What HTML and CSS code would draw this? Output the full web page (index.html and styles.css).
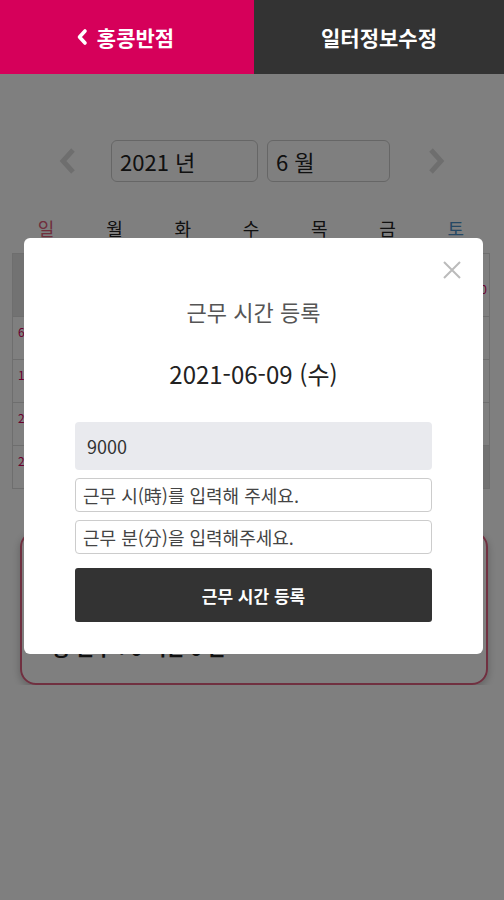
FILE: index.html
```html
<!DOCTYPE html>
<html lang="ko">
<head>
  <meta charset="UTF-8" />
  <meta name="viewport" content="width=device-width, initial-scale=1.0"/>
  <title>일터정보수정</title>
  <link rel="stylesheet" href="styles.css">
</head>
<body>
  <div class="top">
    <div class="top-left">
      <svg class="back" viewBox="0 0 12 18" width="12" height="18"><path d="M9 3 L3.5 9 L9 15" fill="none" stroke="#fff" stroke-width="3.6" stroke-linecap="round" stroke-linejoin="round"/></svg>
      <span>홍콩반점</span>
    </div>
    <div class="top-right">일터정보수정</div>
  </div>

  <div class="달력">
    <div class="월선택">
      <svg class="화살표" viewBox="0 0 20 28" width="20" height="28"><path d="M15 3 L5 14 L15 25" fill="none" stroke="#ddd" stroke-width="5"/></svg>
      <div class="박스 년">2021 년</div>
      <div class="박스 월">6 월</div>
      <svg class="화살표" viewBox="0 0 20 28" width="20" height="28"><path d="M5 3 L15 14 L5 25" fill="none" stroke="#ddd" stroke-width="5"/></svg>
    </div>

    <div class="요일">
      <span class="일">일</span><span>월</span><span>화</span><span>수</span><span>목</span><span>금</span><span class="토">토</span>
    </div>

    <div class="날짜">
      <div class="칸 빈 첫줄"></div><div class="칸 빈 첫줄"></div><div class="칸 첫줄">1</div><div class="칸 첫줄">2</div><div class="칸 첫줄">3</div><div class="칸 첫줄">4</div><div class="칸 첫줄 토"><span class="기록">10:00</span>5</div>
      <div class="칸 일">6</div><div class="칸">7</div><div class="칸">8</div><div class="칸">9</div><div class="칸">10</div><div class="칸">11</div><div class="칸 토">12</div>
      <div class="칸 일">13</div><div class="칸">14</div><div class="칸">15</div><div class="칸">16</div><div class="칸">17</div><div class="칸">18</div><div class="칸 토">19</div>
      <div class="칸 일">20</div><div class="칸">21</div><div class="칸">22</div><div class="칸">23</div><div class="칸">24</div><div class="칸">25</div><div class="칸 토">26</div>
      <div class="칸 일">27</div><div class="칸">28</div><div class="칸">29</div><div class="칸">30</div><div class="칸 빈"></div><div class="칸 빈"></div><div class="칸 빈"></div>
    </div>

    <div class="합계">
      <p>이번달 근무시간</p>
      <p class="합계-값">총 근무 : 0 시간 0 분</p>
    </div>
  </div>

  <div class="덮개">
    <div class="모달">
      <svg class="닫기" viewBox="0 0 20 20" width="20" height="20"><path d="M2 2 L18 18 M18 2 L2 18" stroke="#bbb" stroke-width="2"/></svg>
      <h2>근무 시간 등록</h2>
      <p class="일자">2021-06-09 (수)</p>
      <div class="입력">
        <input type="text" class="금액" value="9000" readonly>
        <input type="text" class="칸입력" placeholder="근무 시(時)를 입력해 주세요.">
        <input type="text" class="칸입력" placeholder="근무 분(分)을 입력해주세요.">
        <button class="등록">근무 시간 등록</button>
      </div>
    </div>
  </div>
</body>
</html>
```

FILE: styles.css
```css
body {
  margin: 0;
  font-family: "Noto Sans CJK KR", "Noto Sans", sans-serif;
  background-color: #fff;
  color: #222;
}

.top {
  position: relative;
  z-index: 10;
  display: grid;
  grid-template-columns: 254px 1fr;
  height: 74px;
  color: #fff;
  font-size: 21px;
  font-weight: bold;
}

.top-left {
  background-color: #d6005a;
  display: flex;
  align-items: center;
  justify-content: center;
  gap: 9px;
  padding-right: 4px;
}

.top-right {
  background-color: #333;
  display: flex;
  align-items: center;
  justify-content: center;
}

.월선택 {
  display: flex;
  align-items: center;
  justify-content: center;
  margin-top: 66px;
  height: 42px;
}

.화살표 {
  margin: 0 33px 0 34px;
}

.박스 {
  box-sizing: border-box;
  height: 42px;
  border: 1px solid #ccc;
  border-radius: 6px;
  font-size: 22px;
  line-height: 40px;
  padding-left: 8px;
}

.년 {
  width: 147px;
  margin-right: 9px;
}

.월 {
  width: 123px;
}

.월선택 .화살표:last-child {
  margin: 0 34px 0 36px;
}

.요일 {
  display: grid;
  grid-template-columns: repeat(7, 1fr);
  margin: 35px 14px 0 12px;
  font-size: 18px;
  text-align: center;
  line-height: 22px;
}

.요일 .일 {
  color: #e0607a;
}

.요일 .토 {
  color: #4a90c8;
}

.날짜 {
  display: grid;
  grid-template-columns: repeat(7, 1fr);
  margin: 14px 14px 0 12px;
  border-top: 1px solid #ddd;
  border-left: 1px solid #ddd;
}

.칸 {
  position: relative;
  height: 43px;
  border-right: 1px solid #ddd;
  border-bottom: 1px solid #ddd;
  font-size: 12px;
  padding: 6px 0 0 5px;
  box-sizing: border-box;
  color: #333;
}

.칸.첫줄 {
  height: 63px;
}

.칸.빈 {
  background-color: #e4e4e4;
}

.칸.일 {
  color: #d6005a;
}

.칸.토 {
  color: #2a78c0;
}

.기록 {
  position: absolute;
  right: 2px;
  top: 26px;
  color: #d6005a;
  font-size: 12px;
}

.합계 {
  margin: 42px 16px 0 20px;
  height: 154px;
  box-sizing: border-box;
  border: 2px solid #e06080;
  border-radius: 16px;
  box-shadow: 0 3px 8px rgba(0, 0, 0, 0.25);
  padding: 30px 30px 0;
  font-weight: bold;
  font-size: 20px;
}

.합계 p {
  margin: 0 0 18px;
  line-height: 30px;
}

.합계-값 {
  padding-top: 22px;
}

.덮개 {
  position: fixed;
  top: 74px;
  left: 0;
  right: 0;
  bottom: 0;
  background-color: rgba(0, 0, 0, 0.5);
  z-index: 5;
}

.모달 {
  position: relative;
  margin: 164px 0 0 24px;
  width: 459px;
  background-color: #fff;
  border-radius: 6px;
  padding: 58px 0 32px;
  box-sizing: border-box;
  text-align: center;
}

.닫기 {
  position: absolute;
  top: 22px;
  right: 21px;
}

.모달 h2 {
  margin: 0;
  font-size: 22px;
  font-weight: normal;
  line-height: 30px;
  color: #555;
}

.일자 {
  margin: 32px 0 0;
  font-size: 24px;
  line-height: 32px;
  color: #222;
}

.입력 {
  margin: 32px 51px 0;
  display: flex;
  flex-direction: column;
  text-align: left;
}

.입력 input {
  box-sizing: border-box;
  font-family: inherit;
  font-size: 18px;
  color: #333;
  border-radius: 4px;
  outline: none;
}

.금액 {
  height: 48px;
  border: none;
  background-color: #e9eaee;
  padding-left: 12px;
}

.칸입력 {
  height: 34px;
  margin-top: 8px;
  border: 1px solid #ccc;
  background-color: #fff;
  padding: 0 0 0 7px;
}

.칸입력::placeholder {
  color: #444;
}

.등록 {
  margin-top: 14px;
  height: 54px;
  border: none;
  border-radius: 3px;
  background-color: #333;
  color: #fff;
  font-family: inherit;
  font-size: 17px;
  font-weight: bold;
  cursor: pointer;
}
```
